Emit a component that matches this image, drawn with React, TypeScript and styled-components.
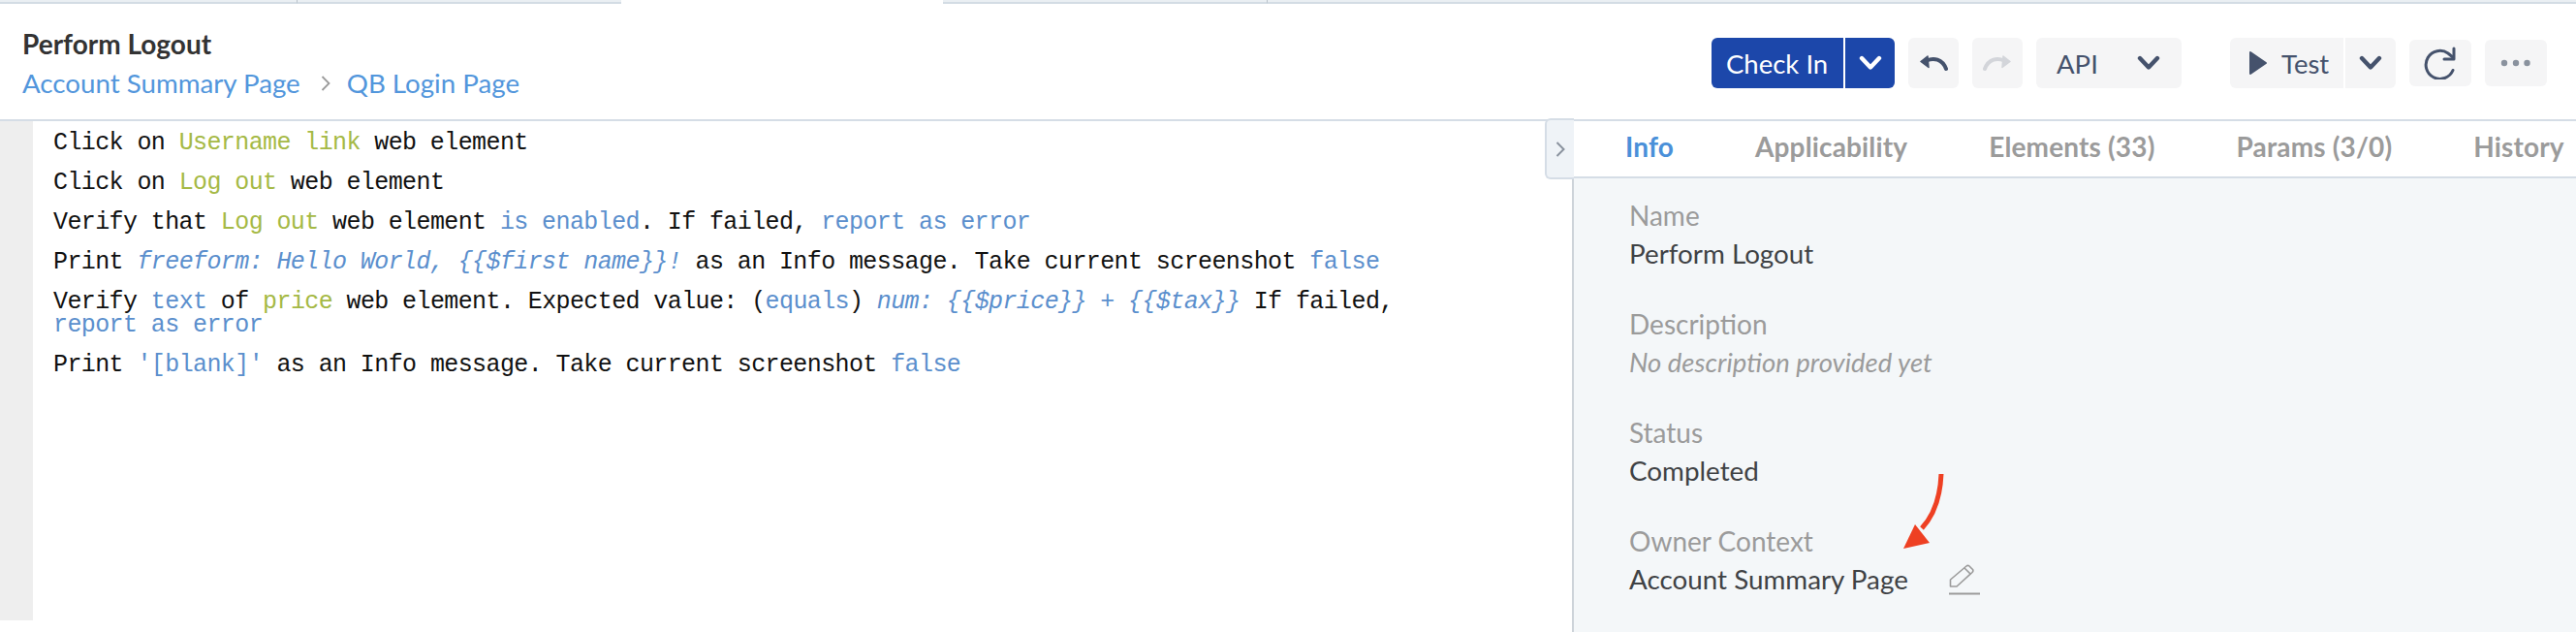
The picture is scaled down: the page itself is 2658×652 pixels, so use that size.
import React from "react";
import styled, { createGlobalStyle } from "styled-components";

const Global = createGlobalStyle`
  html, body { margin: 0; padding: 0; background: #fff; }
  body { font-family: Lato, "Liberation Sans", sans-serif; }
`;

const Page = styled.div`
  width: 2658px;
  height: 652px;
  position: relative;
  overflow: hidden;
  display: flex;
  flex-direction: column;
  background: #fff;
`;

const TabStrip = styled.div`
  display: flex;
  height: 4px;
  flex: none;
`;
const StripTab = styled.div<{ $w?: number; $active?: boolean; $divider?: boolean }>`
  ${(p) => (p.$w ? `width: ${p.$w}px; flex: none;` : "flex: 1;")}
  box-sizing: border-box;
  background: ${(p) => (p.$active ? "#fff" : "#eaeff3")};
  border-bottom: ${(p) => (p.$active ? "0" : "2px solid #d3dce4")};
  border-right: ${(p) => (p.$divider ? "1px solid #b9c2ca" : "0")};
`;

const Header = styled.header`
  height: 121px;
  flex: none;
  box-sizing: border-box;
  border-bottom: 2px solid #d5dde6;
  display: flex;
  justify-content: space-between;
  padding: 35px 30px 0 23px;
`;
const TitleBlock = styled.div`
  display: flex;
  flex-direction: column;
`;
const Title = styled.div`
  font-size: 28px;
  line-height: 32px;
  font-weight: 700;
  color: #333;
  margin-top: -10px;
  margin-bottom: 9px;
`;
const Crumbs = styled.div`
  display: flex;
  align-items: center;
  font-size: 27.7px;
  line-height: 32px;
  color: #5296dc;
`;
const CrumbSep = styled.svg`
  width: 10px;
  height: 18px;
  margin: 0 17px 0 21px;
`;

const Toolbar = styled.div`
  display: flex;
  align-items: flex-start;
`;
const Group = styled.div<{ $gap: number }>`
  display: flex;
  margin-left: ${(p) => p.$gap}px;
  align-items: center;
`;
const Primary = styled.button`
  height: 52px;
  width: 136px;
  border: 0;
  padding: 0 0 0 15px;
  margin: 0;
  text-align: left;
  background: #1c47aa;
  color: #fff;
  font: 400 27.5px Lato, sans-serif;
  border-radius: 6px 0 0 6px;
`;
const PrimaryCaret = styled.button`
  height: 52px;
  width: 51px;
  margin-left: 2px;
  padding: 0;
  border: 0;
  background: #1c47aa;
  border-radius: 0 6px 6px 0;
  display: flex;
  align-items: center;
  justify-content: center;
`;
const ToolBtn = styled.button<{ $w: number; $h?: number; $drop?: boolean }>`
  width: ${(p) => p.$w}px;
  height: ${(p) => p.$h ?? 52}px;
  margin: ${(p) => (p.$drop ? "2px 0 0" : "0")};
  padding: 0;
  border: 0;
  background: #f5f5f6;
  border-radius: 6px;
  display: flex;
  align-items: center;
  justify-content: center;
`;
const ApiBtn = styled.button`
  width: 150px;
  height: 52px;
  padding: 0 22px 0 21px;
  border: 0;
  background: #f5f5f6;
  border-radius: 6px;
  display: flex;
  align-items: center;
  justify-content: space-between;
  color: #45526c;
  font: 400 27.5px Lato, sans-serif;
`;
const TestBtn = styled.button`
  width: 117px;
  height: 52px;
  padding: 0 0 0 19px;
  border: 0;
  background: #f5f5f6;
  border-radius: 6px 0 0 6px;
  display: flex;
  align-items: center;
  gap: 14px;
  color: #45526c;
  font: 400 27.5px Lato, sans-serif;
`;
const TestCaret = styled.button`
  width: 52px;
  height: 52px;
  margin-left: 2px;
  padding: 0;
  border: 0;
  background: #f5f5f6;
  border-radius: 0 6px 6px 0;
  display: flex;
  align-items: center;
  justify-content: center;
`;

const Main = styled.div`
  flex: 1;
  display: flex;
  min-height: 0;
`;
const EditorPane = styled.div`
  width: 1622px;
  flex: none;
  display: flex;
  align-items: flex-start;
`;
const Gutter = styled.div`
  width: 34px;
  height: 515px;
  flex: none;
  background: #eeeeee;
`;
const Code = styled.div`
  padding: 11px 0 0 21px;
  width: 1440px;
`;
const Line = styled.div`
  font-family: "Liberation Mono", monospace;
  font-size: 25px;
  letter-spacing: -0.6px;
  line-height: 24px;
  color: #111;
  margin-bottom: 17px;
  white-space: pre-wrap;
`;
const El = styled.span`
  color: #a5b945;
`;
const Kw = styled.span<{ $italic?: boolean }>`
  color: #5b8fcd;
  font-style: ${(p) => (p.$italic ? "italic" : "normal")};
`;

const Side = styled.aside`
  flex: 1;
  display: flex;
  flex-direction: column;
  border-left: 2px solid #cdd3d9;
  background: #f4f7f9;
`;
const Tabs = styled.nav`
  height: 59px;
  flex: none;
  box-sizing: border-box;
  background: #fff;
  border-bottom: 2px solid #d5dde6;
  display: flex;
  align-items: center;
  gap: 84px;
  padding: 0 0 5px 53px;
  white-space: nowrap;
`;
const TabItem = styled.span<{ $active?: boolean }>`
  font-size: 28px;
  letter-spacing: 0.15px;
  font-weight: 700;
  color: ${(p) => (p.$active ? "#4a90d9" : "#9b9b9b")};
`;
const Collapse = styled.div`
  position: absolute;
  left: 1594px;
  top: 122px;
  width: 30px;
  height: 63px;
  box-sizing: border-box;
  border: 2px solid #d5dde6;
  border-right: 0;
  border-radius: 6px 0 0 6px;
  background: #eff3f7;
  display: flex;
  align-items: center;
  justify-content: center;
`;
const Info = styled.div`
  padding: 20px 0 0 57px;
`;
const Field = styled.div`
  height: 112px;
`;
const Label = styled.div`
  font-size: 28px;
  line-height: 36px;
  color: #9b9b9b;
`;
const Value = styled.div<{ $muted?: boolean }>`
  font-size: ${(p) => (p.$muted ? "27.5px" : "27.8px")};
  line-height: 36px;
  margin-top: 4px;
  color: ${(p) => (p.$muted ? "#9b9b9b" : "#3f4245")};
  font-style: ${(p) => (p.$muted ? "italic" : "normal")};
  display: flex;
  align-items: center;
`;
const Pencil = styled.svg`
  width: 32px;
  height: 32px;
  margin-left: 42px;
  flex: none;
`;
const Arrow = styled.svg`
  position: absolute;
  left: 1960px;
  top: 485px;
  width: 48px;
  height: 85px;
`;

const Chevron = ({ color = "#45526c" }: { color?: string }) => (
  <svg width="24" height="16" viewBox="0 0 24 16" fill="none">
    <path d="M3 3 L12 12.5 L21 3" stroke={color} strokeWidth="4.4" strokeLinecap="round" strokeLinejoin="round" />
  </svg>
);

const UndoArrow = styled.svg<{ $flip?: boolean }>`
  width: 30px;
  height: 16px;
  transform: ${(p) => (p.$flip ? "scaleX(-1)" : "none")};
`;

const Undo = ({ color, flip }: { color: string; flip?: boolean }) => (
  <UndoArrow viewBox="0 0 30 16" fill="none" $flip={flip}>
    <path d="M8 5.5 C15 2.5 24 3.5 28 14" stroke={color} strokeWidth="4" strokeLinecap="round" fill="none" />
    <path d="M2 6.5 L9 1 L10 12.5 Z" fill={color} stroke={color} strokeWidth="1.5" strokeLinejoin="round" />
  </UndoArrow>
);

export default function App() {
  return (
    <Page>
      <Global />
      <TabStrip>
        <StripTab $w={307} $divider />
        <StripTab $w={334} />
        <StripTab $w={332} $active />
        <StripTab $w={335} $divider />
        <StripTab />
      </TabStrip>
      <Header>
        <TitleBlock>
          <Title>Perform Logout</Title>
          <Crumbs>
            <span>Account Summary Page</span>
            <CrumbSep viewBox="0 0 10 18" fill="none">
              <path d="M1.5 2 L8.5 9 L1.5 16" stroke="#9b9b9b" strokeWidth="1.8" />
            </CrumbSep>
            <span>QB Login Page</span>
          </Crumbs>
        </TitleBlock>
        <Toolbar>
          <Group $gap={0}>
            <Primary>Check In</Primary>
            <PrimaryCaret>
              <Chevron color="#fff" />
            </PrimaryCaret>
          </Group>
          <Group $gap={14}>
            <ToolBtn $w={52}>
              <Undo color="#45526c" />
            </ToolBtn>
          </Group>
          <Group $gap={14}>
            <ToolBtn $w={52}>
              <Undo color="#d3d5da" flip />
            </ToolBtn>
          </Group>
          <Group $gap={14}>
            <ApiBtn>
              <span>API</span>
              <Chevron />
            </ApiBtn>
          </Group>
          <Group $gap={50}>
            <TestBtn>
              <svg width="20" height="26" viewBox="0 0 20 26">
                <path d="M2 2 L18 13 L2 24 Z" fill="#45526c" stroke="#45526c" strokeWidth="2" strokeLinejoin="round" />
              </svg>
              <span>Test</span>
            </TestBtn>
            <TestCaret>
              <Chevron />
            </TestCaret>
          </Group>
          <Group $gap={14}>
            <ToolBtn $w={64} $h={48} $drop>
              <svg width="34" height="34" viewBox="0 0 34 34" fill="none">
                <path d="M30 24.5 A14.5 14.5 0 1 1 25 7 L30.5 11.5" stroke="#45526c" strokeWidth="3" strokeLinecap="round" />
                <path d="M31 2 V13 H21" stroke="#45526c" strokeWidth="3" strokeLinecap="round" strokeLinejoin="round" />
              </svg>
            </ToolBtn>
          </Group>
          <Group $gap={14}>
            <ToolBtn $w={64} $h={48} $drop>
              <svg width="32" height="8" viewBox="0 0 32 8">
                <circle cx="4" cy="4" r="3.2" fill="#8a929e" />
                <circle cx="16" cy="4" r="3.2" fill="#8a929e" />
                <circle cx="27.5" cy="4" r="3.2" fill="#8a929e" />
              </svg>
            </ToolBtn>
          </Group>
        </Toolbar>
      </Header>
      <Main>
        <EditorPane>
          <Gutter />
          <Code>
            <Line>Click on <El>Username link</El> web element</Line>
            <Line>Click on <El>Log out</El> web element</Line>
            <Line>Verify that <El>Log out</El> web element <Kw>is enabled</Kw>. If failed, <Kw>report as error</Kw></Line>
            <Line>Print <Kw $italic>freeform: Hello World, {"{{$first name}}"}!</Kw> as an Info message. Take current screenshot <Kw>false</Kw></Line>
            <Line>Verify <Kw>text</Kw> of <El>price</El> web element. Expected value: (<Kw>equals</Kw>) <Kw $italic>num: {"{{$price}} + {{$tax}}"}</Kw> If failed, <Kw>report as error</Kw></Line>
            <Line>Print <Kw>'[blank]'</Kw> as an Info message. Take current screenshot <Kw>false</Kw></Line>
          </Code>
        </EditorPane>
        <Side>
          <Tabs>
            <TabItem $active>Info</TabItem>
            <TabItem>Applicability</TabItem>
            <TabItem>Elements (33)</TabItem>
            <TabItem>Params (3/0)</TabItem>
            <TabItem>History</TabItem>
          </Tabs>
          <Info>
            <Field>
              <Label>Name</Label>
              <Value>Perform Logout</Value>
            </Field>
            <Field>
              <Label>Description</Label>
              <Value $muted>No description provided yet</Value>
            </Field>
            <Field>
              <Label>Status</Label>
              <Value>Completed</Value>
            </Field>
            <Field>
              <Label>Owner Context</Label>
              <Value>
                Account Summary Page
                <Pencil viewBox="0 0 32 32" fill="none">
                  <path d="M1.5 23 L1.5 16 L18 2 Q19.5 0.8 21 2 L24.5 5.5 Q25.5 7 24 8.5 L8 23 Z" stroke="#9b9b9b" strokeWidth="1.6" strokeLinejoin="round" />
                  <path d="M16 4 L22.5 10.5" stroke="#9b9b9b" strokeWidth="1.6" />
                  <path d="M0 30.5 H32" stroke="#9b9b9b" strokeWidth="2" />
                </Pencil>
              </Value>
            </Field>
          </Info>
        </Side>
      </Main>
      <Collapse>
        <svg width="10" height="18" viewBox="0 0 10 18" fill="none">
          <path d="M1.5 2 L8.5 9 L1.5 16" stroke="#8a929e" strokeWidth="2" />
        </svg>
      </Collapse>
      <Arrow viewBox="0 0 48 85" fill="none">
        <path d="M43 4 C42 28 36 46 23 60" stroke="#ee4023" strokeWidth="5" />
        <path d="M4 81 L16 56 L31 75 Z" fill="#ee4023" />
      </Arrow>
    </Page>
  );
}
